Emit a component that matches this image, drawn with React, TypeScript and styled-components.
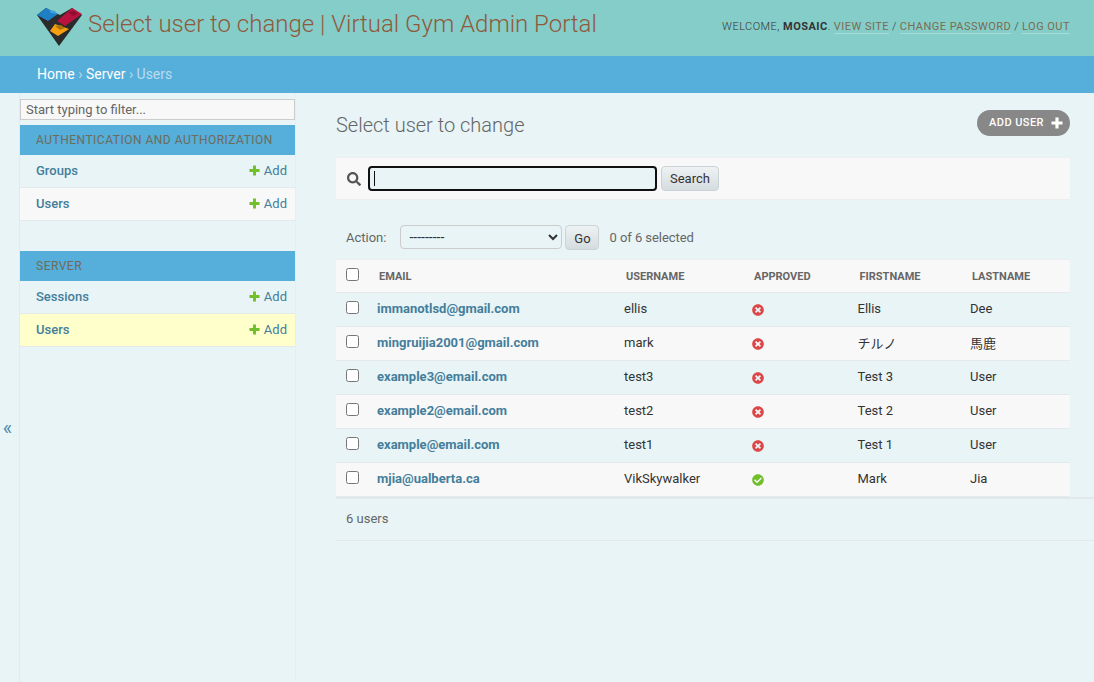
import React from "react";
import styled, { createGlobalStyle } from "styled-components";
import { FaSearch, FaTimesCircle, FaCheckCircle } from "react-icons/fa";

const Global = createGlobalStyle`
  html, body { margin: 0; padding: 0; height: 100%; background: #e8f4f6; overflow: hidden; }
  body { font-family: Roboto, "Noto Sans CJK JP", sans-serif; font-size: 14px; color: #333; }
  * { box-sizing: border-box; }
`;

const Page = styled.div`display: flex; flex-direction: column; height: 682px; overflow: hidden;`;
const Header = styled.header`
  height: 56px; background: #85cdc9; display: flex; align-items: center; justify-content: space-between;
  padding: 0 24px 0 37px; flex: none;
`;
const Brand = styled.div`display: flex; align-items: center; gap: 5px; margin-top: -8px;`;
const Title = styled.h1`margin: 0; font-size: 24px; font-weight: 300; color: #8f5a3c; line-height: 30px;`;
const Tools = styled.div`font-size: 11px; font-weight: 300; letter-spacing: 0.47px; text-transform: uppercase; color: #333; display: flex; gap: 3px; margin-top: -2px; strong { font-weight: 700; }`;
const ToolLink = styled.a`color: #7a6c50; border-bottom: 1px solid #a8dcd8; font-weight: 400;`;
const Breadcrumbs = styled.nav`
  height: 37px; background: #56aedb; flex: none; padding: 0 37px 2px; display: flex; align-items: center;
  font-size: 14px; color: #b9dcef; gap: 3.5px;
`;
const Crumb = styled.a`color: #fff;`;
const Body = styled.div`display: flex; flex: 1; min-height: 0;`;
const Toggle = styled.div`
  width: 20px; flex: none; border-right: 1px solid #e2ecee; color: #4a8bb0; font-size: 20px;
  display: flex; align-items: center; justify-content: center; padding-right: 4px; padding-top: 80px;
`;
const Sidebar = styled.aside`width: 276px; flex: none; border-right: 1px solid #e6eeef; padding-top: 6px;`;
const Filter = styled.input`
  display: block; width: 275px; height: 21px; margin-bottom: 5px; padding: 0 5px; border: 1px solid #ccc;
  background: #f8f8f8; font: 400 13px Roboto, sans-serif; color: #333;
  &::placeholder { color: #666; opacity: 1; }
`;
const Section = styled.section`margin-bottom: 30px;`;
const SectionHead = styled.div`
  height: 30px; width: 275px; background: #56aedb; color: #6e6b58; font-size: 12px; letter-spacing: 0.5px;
  text-transform: uppercase; padding-left: 16px; display: flex; align-items: center;
`;
const SideRow = styled.div<{ $bg: string }>`
  height: 33px; width: 275px; background: ${(p) => p.$bg}; border-bottom: 1px solid #e4eaeb;
  display: flex; align-items: center; justify-content: space-between; padding: 0 8px 2px 16px;
`;
const SideName = styled.a`color: #447e9b; font-weight: 500; font-size: 13px;`;
const AddLink = styled.a`color: #447e9b; font-size: 13px; display: flex; align-items: center; gap: 4px;`;
const Main = styled.main`flex: 1; padding: 20px 0 0 40px; min-width: 0; display: flex; flex-direction: column;`;
const TitleRow = styled.div`display: flex; justify-content: space-between; align-items: flex-start; width: 734px; height: 47px; margin-top: -3px;`;
const Heading = styled.h2`margin: 2px 0 0; font-size: 20px; font-weight: 300; color: #666; line-height: 26px;`;
const AddUser = styled.a`
  height: 26px; width: 93px; border-radius: 13px; background: #888; color: #fff; font-size: 11px; font-weight: 500;
  letter-spacing: 0.45px; display: flex; align-items: center; padding: 0 0 1px 12px; gap: 7px;
`;
const SearchBar = styled.div`
  width: 734px; height: 43px; background: #f8f8f8; border-top: 1px solid #eee; border-bottom: 1px solid #eee;
  display: flex; align-items: center; padding-left: 11px; gap: 4px; color: #555;
`;
const SearchWrap = styled.div`
  position: relative; margin-left: 3px; display: flex;
  &::after { content: ""; position: absolute; left: 6px; top: 5px; width: 1px; height: 15px; background: #111; }
`;
const SearchInput = styled.input`
  width: 289px; height: 25px; background: #e8f4f6; border: 2px solid #101010; border-radius: 4px; outline: none;
  padding: 0 3px; font: 14px Roboto, sans-serif; caret-color: transparent;
`;
const Btn = styled.button`
  height: 25px; padding: 0 8px; border: 1px solid #ccd3d6; border-radius: 4px; font: 13px Roboto, sans-serif; color: #333;
  background: linear-gradient(#eef2f3, #d5dcdf);
`;
const GoBtn = styled(Btn)`width: 34px; padding: 2px 0 0;`;
const Actions = styled.div`
  width: 734px; height: 59px; flex: none; display: flex; align-items: center; padding: 22px 0 7px 10px; color: #666; font-size: 13px;
`;
const Select = styled.select`
  width: 162px; height: 24px; margin-left: 14px; margin-right: 3px; background: #e8f4f6; border: 1px solid #ccc; border-radius: 4px;
  padding: 0 4px; font: 14px Roboto, sans-serif; color: #333;
`;
const Selected = styled.span`margin-left: 10px; letter-spacing: -0.05px;`;
const Table = styled.table`width: 734px; table-layout: fixed; border-collapse: collapse; font-size: 13px;`;
const Head = styled.th`
  height: 33px; background: #f8f8f8; color: #666; font-size: 11px; font-weight: 700; text-align: left; text-transform: uppercase;
  padding: 1px 0 0 12px; border-top: 1px solid #eee; border-bottom: 1px solid #e8e8e8; letter-spacing: 0;
`;
const CheckHead = styled(Head)`padding: 0 0 4px 10px;`;
const Row = styled.tr<{ $alt: boolean }>`background: ${(p) => (p.$alt ? "#f8f8f8" : "#e8f4f6")};`;
const Cell = styled.td`height: 34px; padding: 0 0 2px 10px; color: #333; border-bottom: 1px solid #e4eaeb; vertical-align: middle;`;
const CheckCell = styled(Cell)`padding-bottom: 5px;`;
const EmailLink = styled.a`color: #447e9b; font-weight: 700;`;
const Box = styled.input`display: block; width: 13px; height: 13px; margin: 0;`;
const Status = styled.span<{ $ok: boolean }>`display: flex; color: ${(p) => (p.$ok ? "#70bf2b" : "#dd4646")}; padding-top: 3px;`;
const Paginator = styled.div`
  height: 44px; margin-right: -4px; border-top: 2px solid #e2e8e9; border-bottom: 1px solid #e2e8e9; color: #666; font-size: 13px;
  display: flex; align-items: center; padding: 0 0 2px 10px;
`;

const Logo = () => (
  <svg width="46" height="46" viewBox="0 0 46 46">
    <polygon points="0,14 9,7 23,14 35,7 45,14 22,45" fill="#2b2b2b" />
    <polygon points="0,14 9,7 21,13 11,20" fill="#1f7fc4" />
    <polygon points="12,9 18,10 20,13 14,12" fill="#3fa0e0" />
    <polygon points="20,20 35,7 45,13 28,25" fill="#b8123f" />
    <polygon points="31,11 37,10 41,13 36,15" fill="#8e0e30" />
    <polygon points="13,30 18,23 32,28 21,35" fill="#f5a010" />
    <polygon points="18,25 24,24 28,27 23,29" fill="#a8730d" />
  </svg>
);

const Plus = ({ color, size }: { color: string; size: number }) => (
  <svg width={size} height={size} viewBox="0 0 12 12" fill={color}>
    <path d="M4.4 0.5h3.2v3.9h3.9v3.2H7.6v3.9H4.4V7.6H0.5V4.4h3.9z" />
  </svg>
);

const users = [
  ["immanotlsd@gmail.com", "ellis", false, "Ellis", "Dee"],
  ["mingruijia2001@gmail.com", "mark", false, "チルノ", "馬鹿"],
  ["example3@email.com", "test3", false, "Test 3", "User"],
  ["example2@email.com", "test2", false, "Test 2", "User"],
  ["example@email.com", "test1", false, "Test 1", "User"],
  ["mjia@ualberta.ca", "VikSkywalker", true, "Mark", "Jia"],
] as const;

const SideItem = ({ name, bg }: { name: string; bg: string }) => (
  <SideRow $bg={bg}>
    <SideName>{name}</SideName>
    <AddLink><Plus color="#70bf2b" size={11} />Add</AddLink>
  </SideRow>
);

export default function App() {
  return (
    <Page>
      <Global />
      <Header>
        <Brand>
          <Logo />
          <Title>Select user to change | Virtual Gym Admin Portal</Title>
        </Brand>
        <Tools>
          <span>Welcome, <strong>Mosaic</strong>.</span>
          <ToolLink>View site</ToolLink>/<ToolLink>Change password</ToolLink>/<ToolLink>Log out</ToolLink>
        </Tools>
      </Header>
      <Breadcrumbs><Crumb>Home</Crumb>›<Crumb>Server</Crumb>› Users</Breadcrumbs>
      <Body>
        <Toggle>«</Toggle>
        <Sidebar>
          <Filter placeholder="Start typing to filter..." />
          <Section>
            <SectionHead>Authentication and Authorization</SectionHead>
            <SideItem name="Groups" bg="#e8f4f6" />
            <SideItem name="Users" bg="#f8f8f8" />
          </Section>
          <Section>
            <SectionHead>Server</SectionHead>
            <SideItem name="Sessions" bg="#e8f4f6" />
            <SideItem name="Users" bg="#ffffcc" />
          </Section>
        </Sidebar>
        <Main>
          <TitleRow>
            <Heading>Select user to change</Heading>
            <AddUser>ADD USER <Plus color="#fff" size={12} /></AddUser>
          </TitleRow>
          <SearchBar>
            <FaSearch size={14} />
            <SearchWrap><SearchInput autoFocus /></SearchWrap>
            <Btn>Search</Btn>
          </SearchBar>
          <Actions>
            Action:
            <Select defaultValue="">
              <option value="">---------</option>
            </Select>
            <GoBtn>Go</GoBtn>
            <Selected>0 of 6 selected</Selected>
          </Actions>
          <Table>
            <colgroup>
              <col width="31" /><col width="247" /><col width="128" /><col width="105.5" /><col width="112.5" /><col width="110" />
            </colgroup>
            <thead>
              <tr>
                <CheckHead><Box type="checkbox" /></CheckHead>
                <Head>Email</Head><Head>Username</Head><Head>Approved</Head><Head>Firstname</Head><Head>Lastname</Head>
              </tr>
            </thead>
            <tbody>
              {users.map((u, i) => (
                <Row key={u[0]} $alt={i % 2 === 1}>
                  <CheckCell><Box type="checkbox" /></CheckCell>
                  <Cell><EmailLink>{u[0]}</EmailLink></Cell>
                  <Cell>{u[1]}</Cell>
                  <Cell><Status $ok={u[2]}>{u[2] ? <FaCheckCircle size={12} /> : <FaTimesCircle size={12} />}</Status></Cell>
                  <Cell>{u[3]}</Cell>
                  <Cell>{u[4]}</Cell>
                </Row>
              ))}
            </tbody>
          </Table>
          <Paginator>6 users</Paginator>
        </Main>
      </Body>
    </Page>
  );
}
